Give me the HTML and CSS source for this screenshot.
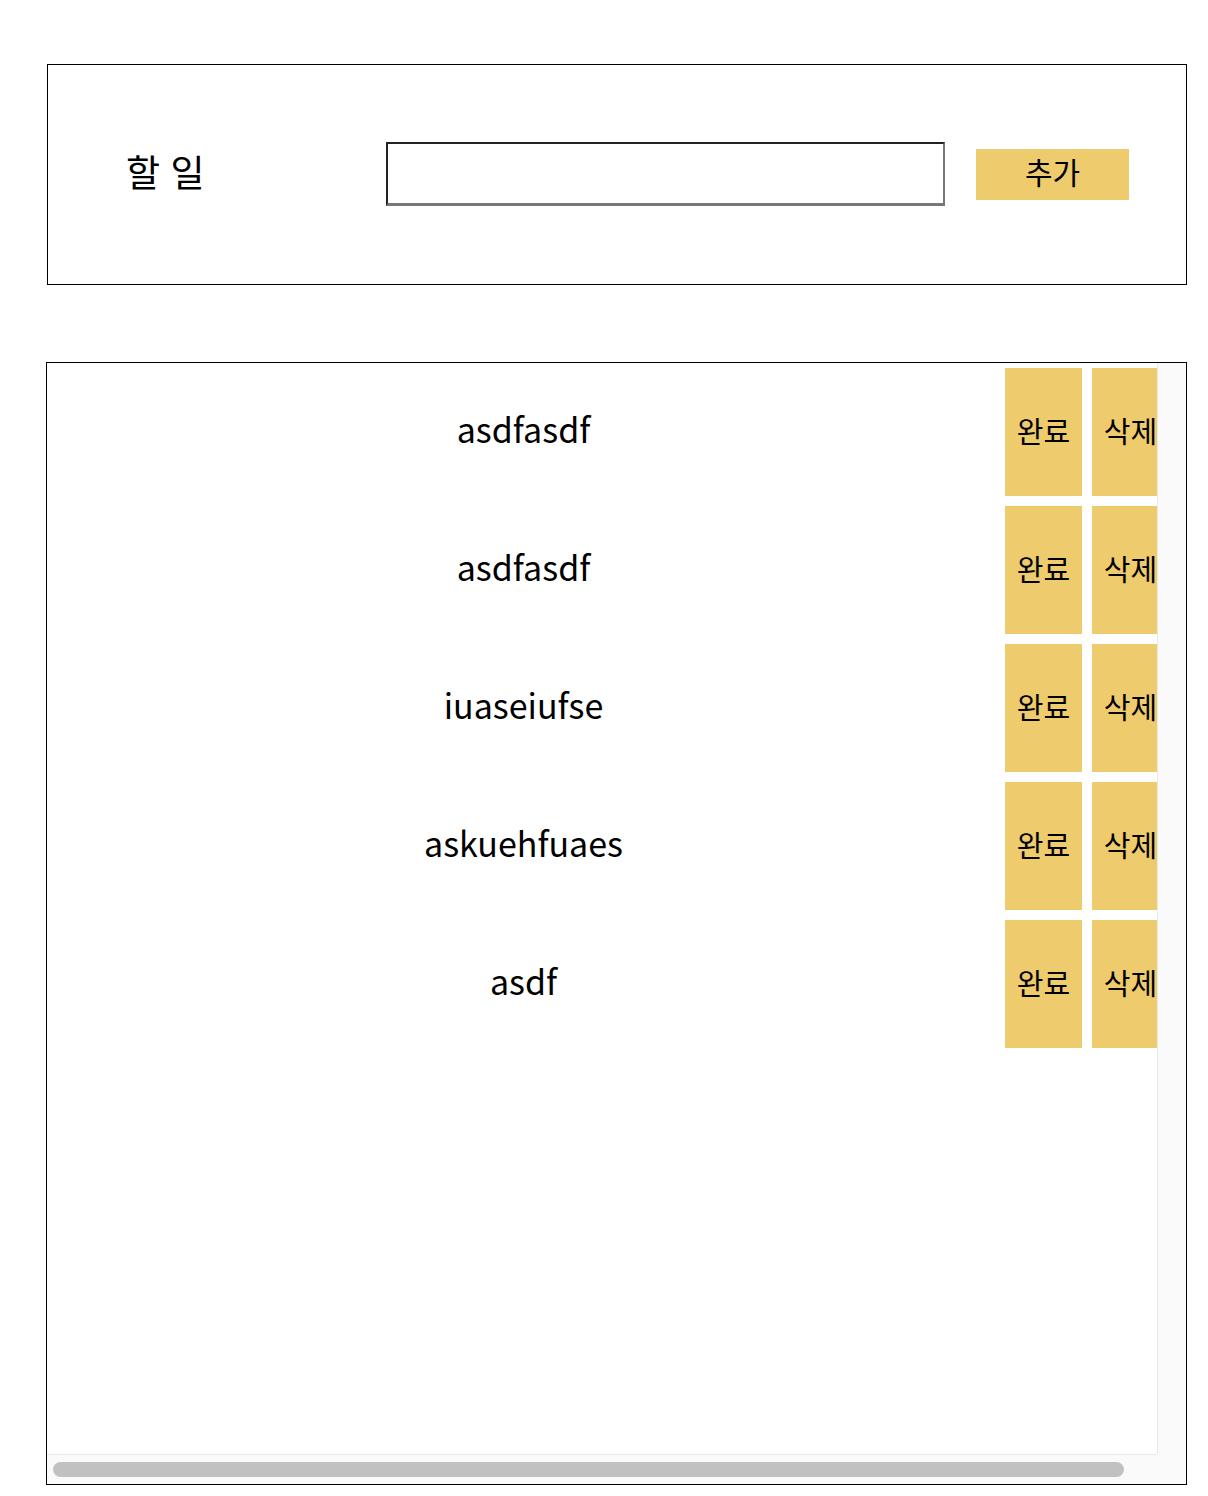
FILE: index.html
```html
<!DOCTYPE html>
<html lang="ko">
<head>
<meta charset="utf-8">
<title>할 일</title>
<link rel="stylesheet" href="styles.css">
</head>
<body>
<div class="page">
  <div class="form-box">
    <div class="label">할 일</div>
    <input class="todo-input" type="text">
    <button class="add-btn">추가</button>
  </div>
  <div class="list-box">
    <div class="viewport">
      <div class="list">
        <div class="row"><div class="text">asdfasdf</div><button class="btn">완료</button><button class="btn">삭제</button></div>
        <div class="row"><div class="text">asdfasdf</div><button class="btn">완료</button><button class="btn">삭제</button></div>
        <div class="row"><div class="text">iuaseiufse</div><button class="btn">완료</button><button class="btn">삭제</button></div>
        <div class="row"><div class="text">askuehfuaes</div><button class="btn">완료</button><button class="btn">삭제</button></div>
        <div class="row"><div class="text">asdf</div><button class="btn">완료</button><button class="btn">삭제</button></div>
      </div>
    </div>
    <div class="vtrack"></div>
    <div class="htrack"><div class="hthumb"></div></div>
    <div class="corner"></div>
  </div>
</div>
</body>
</html>
```
FILE: styles.css
```css
* { box-sizing: border-box; }
html, body { margin: 0; padding: 0; background: #fff; }
body { font-family: "Noto Sans CJK KR", "Noto Sans", sans-serif; color: #000; }
.page { padding: 64px 21px 0 46px; }
.form-box {
  margin-left: 1px;
  height: 221px;
  border: 1px solid #000;
  display: flex;
  align-items: center;
}
.label {
  width: 338px;
  padding-left: 78px;
  padding-bottom: 6px;
  font-size: 37px;
  line-height: 1;
}
.todo-input {
  width: 559px;
  height: 64px;
  border-style: solid;
  border-width: 2px 2px 3px 2px;
  border-color: #222 #777 #777 #222;
  margin: 0 0 2px 0;
  padding: 0 4px;
  font-size: 24px;
  background: #fff;
}
.add-btn {
  margin-left: 31px;
  width: 153px;
  height: 51px;
  border: none;
  background: #eecb6c;
  font-family: inherit;
  font-size: 30px;
  line-height: 1;
  padding: 0 0 7px 0;
  color: #000;
}
.list-box {
  margin-top: 77px;
  height: 1123px;
  border: 1px solid #000;
  display: grid;
  grid-template-columns: 1fr 29px;
  grid-template-rows: 1fr 30px;
}
.viewport { overflow: hidden; }
.list { width: 1127px; }
.row { display: flex; align-items: center; height: 138px; }
.text {
  flex: 1;
  text-align: center;
  font-size: 34px;
  line-height: 1;
  padding-bottom: 6px;
}
.btn {
  width: 77px;
  height: 128px;
  margin: 5px;
  border: none;
  padding: 0 0 4px 0;
  background: #eecb6c;
  font-family: inherit;
  font-size: 29px;
  line-height: 1;
  color: #000;
}
.vtrack { background: #fafafa; border-left: 1px solid #e8e8e8; }
.htrack { background: #fafafa; border-top: 1px solid #e8e8e8; padding: 7px 0 0 6px; }
.hthumb { width: 1071px; height: 15px; border-radius: 8px; background: #c1c1c1; }
.corner { background: #fafafa; }
```
